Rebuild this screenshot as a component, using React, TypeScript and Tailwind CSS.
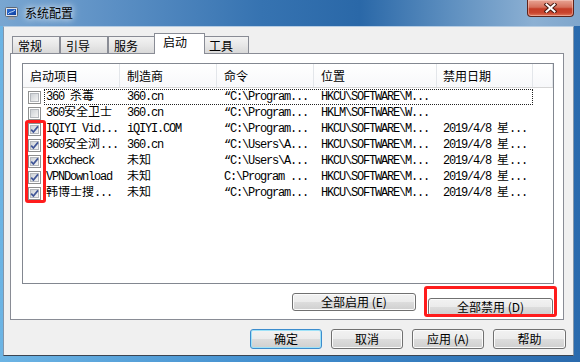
type Row = {
  on: boolean;
  name: string;
  maker: string;
  cmd: string;
  loc: string;
  date: string;
};

const rows: Row[] = [
  { on: false, name: '360 杀毒', maker: '360.cn', cmd: '“C:\\Program...', loc: 'HKCU\\SOFTWARE\\M...', date: '' },
  { on: false, name: '360安全卫士', maker: '360.cn', cmd: '“C:\\Program...', loc: 'HKLM\\SOFTWARE\\W...', date: '' },
  { on: true, name: 'IQIYI Vid...', maker: 'iQIYI.COM', cmd: '“C:\\Program...', loc: 'HKCU\\SOFTWARE\\M...', date: '2019/4/8 星...' },
  { on: true, name: '360安全浏...', maker: '360.cn', cmd: '“C:\\Users\\A...', loc: 'HKCU\\SOFTWARE\\M...', date: '2019/4/8 星...' },
  { on: true, name: 'txkcheck', maker: '未知', cmd: '“C:\\Users\\A...', loc: 'HKCU\\SOFTWARE\\M...', date: '2019/4/8 星...' },
  { on: true, name: 'VPNDownload', maker: '未知', cmd: 'C:\\Program ...', loc: 'HKCU\\SOFTWARE\\M...', date: '2019/4/8 星...' },
  { on: true, name: '韩博士搜...', maker: '未知', cmd: '“C:\\Program...', loc: 'HKCU\\SOFTWARE\\M...', date: '2019/4/8 星...' },
];

// latin runs get squeezed to 6px cells, CJK runs keep full width
function Mono({ text }: { text: string }) {
  const parts = text.split(/([\u3400-\u9fff]+)/);
  return (
    <>
      {parts.map((p, i) =>
        /[\u3400-\u9fff]/.test(p) ? (
          <span key={i} className="tracking-normal">
            {p}
          </span>
        ) : (
          <span key={i} className="tracking-[-1.2px]">
            {p}
          </span>
        ),
      )}
    </>
  );
}

function CheckBox({ on }: { on: boolean }) {
  return (
    <span className="relative block w-[13px] h-[13px] border border-[#8e8f8f] bg-white">
      <span className="absolute inset-[1px] border border-[#b4b8bd] bg-[linear-gradient(135deg,#cdd1d6,#f4f4f4)]" />
      {on && (
        <svg className="absolute left-0 top-0" width="11" height="11" viewBox="0 0 11 11">
          <path d="M2.2 5.6 L4.4 8 L9 2.4" fill="none" stroke="#3f5597" strokeWidth="1.7" />
        </svg>
      )}
    </span>
  );
}

function WinButton({ label, w, focused }: { label: string; w: string; focused?: boolean }) {
  return (
    <button
      className={`${w} h-full rounded-[3px] border text-[12px] text-black leading-none font-['Noto_Sans_CJK_SC',sans-serif] bg-[linear-gradient(#f2f2f2,#ebebeb_50%,#dddddd_50%,#cfcfcf)] ${
        focused
          ? 'border-[#3c8ccd] shadow-[inset_0_0_0_1px_#9ee2f8]'
          : 'border-[#707070] shadow-[inset_0_0_0_1px_#fbfbfb]'
      }`}
    >
      {label}
    </button>
  );
}

export default function App() {
  const cols = ['w-[97px]', 'w-[97px]', 'w-[97px]', 'w-[123px]', 'w-[96px]'];
  const heads = ['启动项目', '制造商', '命令', '位置', '禁用日期'];

  return (
    <div className="w-[580px] h-[362px] flex flex-col overflow-hidden bg-[linear-gradient(90deg,#6cb4e4,#3f8ccd_50%,#2a6aad)] font-['Noto_Sans_CJK_SC',sans-serif]">
      {/* title bar */}
      <div className="h-[26px] flex items-start bg-[linear-gradient(90deg,#79a6d1_0%,#5b8fc4_20%,#3673b1_45%,#2a68a8_62%,#5f90c0_78%,#8cb0d3_92%,#7fa6cc_100%)]">
        <svg className="ml-[5px] mt-[7px]" width="14" height="13" viewBox="0 0 14 13">
          <defs>
            <linearGradient id="scr" x1="0" y1="0" x2="1" y2="1">
              <stop offset="0" stopColor="#2d6fd6" />
              <stop offset="1" stopColor="#0e3fa0" />
            </linearGradient>
          </defs>
          <rect x="0.5" y="0.5" width="12" height="9" rx="1" fill="#dfe3e8" stroke="#5d6775" />
          <rect x="2" y="2" width="9" height="6" fill="url(#scr)" />
          <path d="M3 7 C5 4 7 6 10 3" stroke="#cfe6ff" strokeWidth="0.9" fill="none" />
          <path d="M4 10 H9 L10.5 12.5 H2.5 Z" fill="#9aa2ad" />
        </svg>
        <span className="ml-[6px] mt-[5px] text-[12px] leading-[16px] text-black [text-shadow:0_0_6px_#ffffff,0_0_10px_rgba(255,255,255,0.7)]">
          系统配置
        </span>
        <div className="ml-auto mr-[6px] w-[47px] h-[17px] flex items-center justify-center rounded-b-[4px] border border-t-0 border-[#5e231a] bg-[linear-gradient(#e8a494,#d5705c_45%,#c43d27_55%,#c9442e_80%,#e07a5e)] shadow-[inset_0_0_0_1px_rgba(255,220,210,0.45)]">
          <svg width="13" height="10" viewBox="0 0 13 10">
            <path d="M2.5 1.5 L10.5 8.5 M10.5 1.5 L2.5 8.5" stroke="#4a1a12" strokeWidth="4" strokeLinecap="square" />
            <path d="M2.5 1.5 L10.5 8.5 M10.5 1.5 L2.5 8.5" stroke="#ffffff" strokeWidth="2" strokeLinecap="square" />
          </svg>
        </div>
      </div>

      <div className="flex-1 flex pl-[3px] pr-[6px] pb-[6px]">
        <div className="flex-1 flex flex-col bg-[#f0f0f0] border border-t-[#b7cde3] border-x-[#8496aa] border-b-[#3b4552] pt-[6px] pb-[6px]">
          {/* tabs */}
          <div className="h-[20px] flex items-end ml-[8px] text-[12px] leading-[14px] text-black">
            {['常规', '引导', '服务'].map((t) => (
              <div
                key={t}
                className="w-[48px] h-[17px] pt-[2px] pl-[5px] border border-b-0 border-[#898c95] bg-[linear-gradient(#f3f3f3,#e8e8e8_50%,#d9d9d9)]"
              >
                {t}
              </div>
            ))}
            <div className="relative z-10 -ml-[2px] -mb-[1px] w-[51px] h-[21px] pt-[1px] pl-[8px] border border-b-0 border-[#898c95] bg-white">
              启动
            </div>
            <div className="w-[44px] h-[17px] pt-[2px] pl-[4px] border border-b-0 border-l-0 border-[#898c95] bg-[linear-gradient(#f3f3f3,#e8e8e8_50%,#d9d9d9)]">
              工具
            </div>
          </div>

          {/* tab page */}
          <div className="ml-[6px] w-[554px] h-[267px] border border-[#898c95] bg-white flex flex-col">
            <div className="relative ml-[11px] mt-[9px] w-[532px] h-[221px] border border-[#828790] bg-white">
              <div className="h-[24px] flex border-b border-[#d5d5d5] bg-[linear-gradient(#ffffff,#f7f8fa)] text-[12px] text-black">
                {heads.map((h, i) => (
                  <div key={h} className={`${cols[i]} flex items-center ${i === 4 ? 'pl-[6px]' : 'pl-[7px]'} border-r border-[#e3e6ea]`}>
                    {h}
                  </div>
                ))}
                <div className="flex-1 border-r border-[#e3e6ea]" />
              </div>

              <div className="pt-[1px] font-['Liberation_Mono','Noto_Sans_CJK_SC',monospace] text-[12px] text-black">
                {rows.map((r, idx) => (
                  <div key={idx} className="h-[16px] flex items-center">
                    <div className="w-[21px] pl-[5px]">
                      <CheckBox on={r.on} />
                    </div>
                    <div
                      className={`w-[489px] h-[16px] flex items-center leading-[14px] border ${
                        idx === 0 ? 'border-dotted border-[#222]' : 'border-transparent'
                      }`}
                    >
                      <div className="w-[75px] pl-[1px] whitespace-nowrap overflow-hidden">
                        <Mono text={r.name} />
                      </div>
                      <div className="w-[97px] pl-[7px] whitespace-nowrap overflow-hidden">
                        <Mono text={r.maker} />
                      </div>
                      <div className="w-[97px] pl-[7px] whitespace-nowrap overflow-hidden">
                        <Mono text={r.cmd} />
                      </div>
                      <div className="w-[123px] pl-[7px] whitespace-nowrap overflow-hidden">
                        <Mono text={r.loc} />
                      </div>
                      <div className="w-[95px] pl-[6px] whitespace-nowrap overflow-hidden">
                        <Mono text={r.date} />
                      </div>
                    </div>
                  </div>
                ))}
              </div>

              {/* highlight around checked boxes */}
              <div className="absolute left-[2px] top-[56px] w-[21px] h-[83px] rounded-[3px] border-[3px] border-[#ff1c1c]" />
            </div>

            <div className="mt-[9px] h-[18px] flex justify-end gap-[12px] pr-[10px]">
              <WinButton label="全部启用 (E)" w="w-[124px]" />
              <div className="relative h-full">
                <WinButton label="全部禁用 (D)" w="w-[125px]" />
                <div className="absolute -left-[4px] -top-[7px] w-[133px] h-[31px] rounded-[3px] border-[3px] border-[#ff1c1c]" />
              </div>
            </div>
          </div>

          {/* dialog buttons */}
          <div className="mt-[9px] h-[20px] flex justify-end gap-[9px] pr-[7px]">
            <WinButton label="确定" w="w-[72px]" focused />
            <WinButton label="取消" w="w-[72px]" />
            <WinButton label="应用 (A)" w="w-[72px]" />
            <WinButton label="帮助" w="w-[73px]" />
          </div>
        </div>
      </div>
    </div>
  );
}
